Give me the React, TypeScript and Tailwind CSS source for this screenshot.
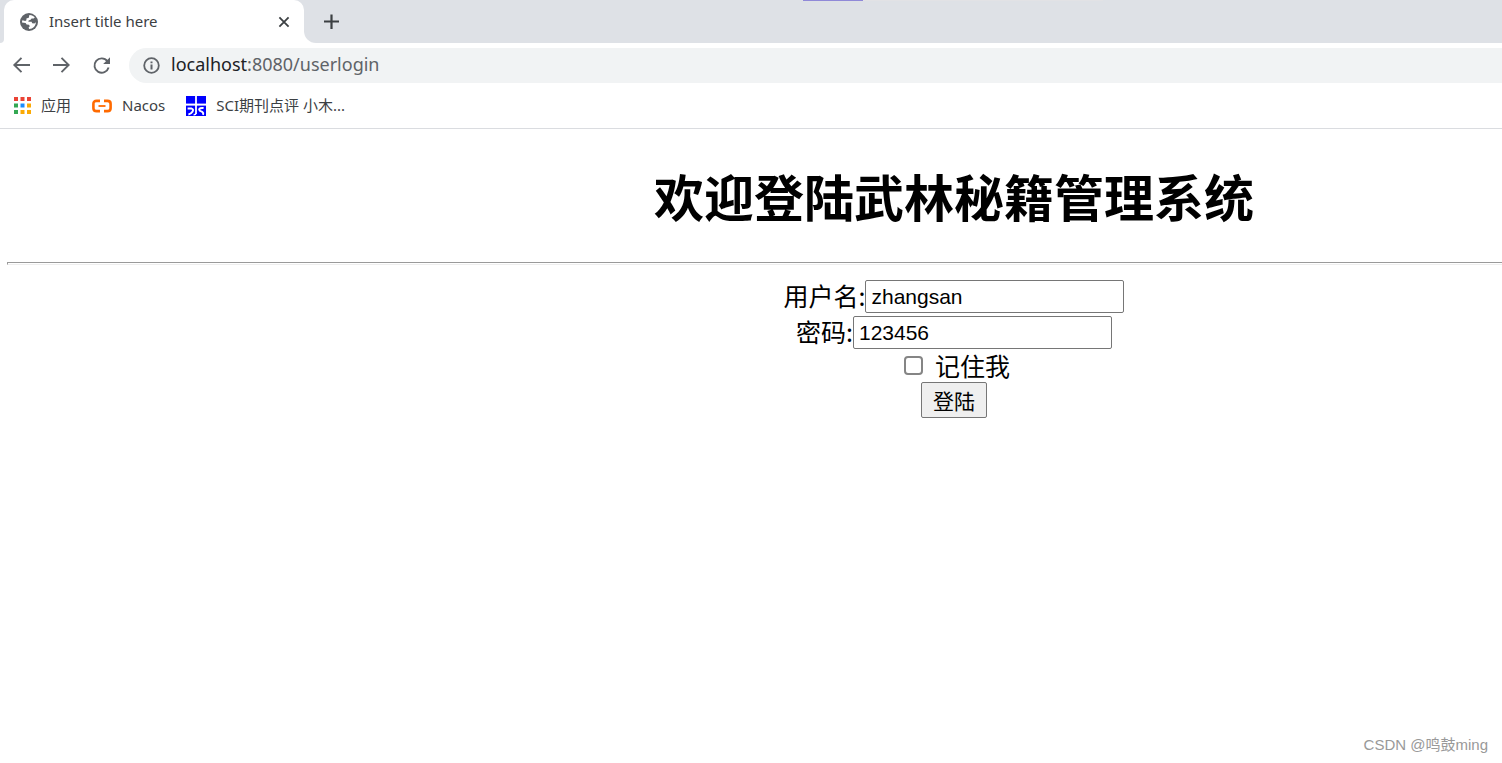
import { useState } from "react";
import type { ReactNode } from "react";

function GlobeIcon() {
  return (
    <svg width="20" height="20" viewBox="0 0 20 20" aria-hidden="true">
      <circle cx="10" cy="10" r="9" fill="#5f6368" />
      <path
        fill="#fff"
        d="M10.4 3C12.6 2.9 14.6 4 15.8 5.6L14.6 6.6 12.6 6.4 11.6 7.8 9.6 8.4 9.4 9.8 12.6 9.8 13.2 11.2 15.4 11.4 16.9 10.2C16.8 13.8 14 16.8 10.2 17L9.6 15.4 10.8 14.2 10 12.8 7.6 12.4 6.6 11 3 10.4C3 9.6 3.1 8.9 3.4 8.2L6.2 9 7.4 8.2 7.4 6.6 9.8 5.8Z"
      />
    </svg>
  );
}

function CloseIcon() {
  return (
    <svg width="12" height="12" viewBox="0 0 12 12" aria-hidden="true">
      <path d="M1.4 1.4 10.6 10.6M10.6 1.4 1.4 10.6" stroke="#3c4043" strokeWidth="1.8" />
    </svg>
  );
}

function PlusIcon() {
  return (
    <svg width="16" height="16" viewBox="0 0 16 16" aria-hidden="true">
      <path d="M8.5 0.5V15M1 7.5H16" stroke="#3c4043" strokeWidth="2.2" />
    </svg>
  );
}

function ArrowIcon({ forward = false }: { forward?: boolean }) {
  return (
    <svg width="18" height="18" viewBox="0 0 18 18" aria-hidden="true">
      <path
        d={forward ? "M1 8H16.5M9.5 0.8 16.7 8 9.5 15.2" : "M18 8H2.5M9.5 0.8 2.3 8 9.5 15.2"}
        fill="none"
        stroke="#5f6368"
        strokeWidth="1.9"
      />
    </svg>
  );
}

function ReloadIcon() {
  return (
    <svg width="18" height="18" viewBox="0 0 18 18" aria-hidden="true">
      <path d="M15.4 4.2A7.2 7.2 0 1 0 16.6 10.6" fill="none" stroke="#5f6368" strokeWidth="1.9" />
      <path d="M18 0.2V7H11.2Z" fill="#5f6368" />
    </svg>
  );
}

function InfoIcon() {
  return (
    <svg width="18" height="18" viewBox="0 0 18 18" aria-hidden="true">
      <circle cx="8.5" cy="8.5" r="7.3" fill="none" stroke="#5f6368" strokeWidth="1.8" />
      <path d="M8.5 7.5V12.5M8.5 4.4V6.2" stroke="#5f6368" strokeWidth="2" />
    </svg>
  );
}

const appDots = [
  "#ea4335", "#ea4335", "#ea4335",
  "#34a853", "#1a8cff", "#fbaa05",
  "#34a853", "#fbaa05", "#fbaa05",
];

function AppsIcon() {
  return (
    <svg width="17" height="17" viewBox="0 0 17 17" aria-hidden="true">
      {appDots.map((fill, i) => (
        <rect key={i} x={(i % 3) * 6.5} y={Math.floor(i / 3) * 6.5} width="4" height="4" fill={fill} />
      ))}
    </svg>
  );
}

function NacosIcon() {
  return (
    <svg width="20" height="14" viewBox="0 0 20 14" aria-hidden="true">
      <path
        d="M8 1.9H4.6Q1.4 1.9 1.4 4.8V9.2Q1.4 12.1 4.6 12.1H8M12 1.9H15.4Q18.6 1.9 18.6 4.8V9.2Q18.6 12.1 15.4 12.1H12"
        fill="none"
        stroke="#ff6a00"
        strokeWidth="2.6"
      />
      <path d="M6.5 7H13.5" stroke="#ff6a00" strokeWidth="1.8" />
    </svg>
  );
}

function JournalIcon() {
  return (
    <svg width="20" height="20" viewBox="0 0 20 20" aria-hidden="true">
      <rect width="20" height="20" fill="#0000ff" />
      <g fill="none" stroke="#fff">
        <path d="M10 0V18" strokeWidth="1.8" />
        <path d="M0 8.6H20" strokeWidth="2" />
        <path d="M1.6 12.6H5.6Q8 13.2 6.4 15.8 5 18 2.4 18.4" strokeWidth="2" />
        <path d="M10 17.4Q9.6 19 7.6 18.8" strokeWidth="1.6" />
        <path d="M17.6 12Q13.2 11.6 13.2 13.6 13.4 15 15.8 15.6 18 16.8 16.8 18.8" strokeWidth="2" />
      </g>
    </svg>
  );
}

function Bookmark({ icon, children }: { icon: ReactNode; children: ReactNode }) {
  return (
    <a href="#" className="flex items-center gap-2.5 whitespace-nowrap">
      {icon}
      <span>{children}</span>
    </a>
  );
}

function BrowserChrome() {
  return (
    <header className="font-['Noto_Sans','Noto_Sans_CJK_SC',sans-serif] text-[#3c4043]">
      <div className="relative flex h-[43px] bg-[#dee1e6]">
        <div className="w-1 bg-white">
          <div className="h-full rounded-br-lg bg-[#dee1e6]" />
        </div>
        <div className="flex w-[300px] items-center rounded-t-[10px] bg-white pr-3.5 pl-[15px] text-[15px]">
          <GlobeIcon />
          <span className="ml-2.5 flex-1 whitespace-nowrap">Insert title here</span>
          <button type="button" aria-label="Close tab">
            <CloseIcon />
          </button>
        </div>
        <div className="flex-1 bg-white">
          <div className="flex h-full items-center rounded-bl-xl bg-[#dee1e6] pl-[19px]">
            <button type="button" aria-label="New tab">
              <PlusIcon />
            </button>
          </div>
        </div>
        <div className="absolute top-0 left-[803px] h-px w-[300px] bg-[#e2e2e5]">
          <div className="h-full w-[60px] bg-[#9089d8]" />
        </div>
      </div>
      <div className="flex items-center pt-[5px] pl-3">
        <nav className="flex items-center gap-[22px]">
          <button type="button" aria-label="Back">
            <ArrowIcon />
          </button>
          <button type="button" aria-label="Forward">
            <ArrowIcon forward />
          </button>
          <button type="button" aria-label="Reload">
            <ReloadIcon />
          </button>
        </nav>
        <div className="ml-[19px] flex h-[35px] flex-1 items-center gap-2.5 rounded-l-full bg-[#f1f3f4] pl-3.5 text-lg/[33px] text-[#5f6368]">
          <InfoIcon />
          <span className="self-start">
            <span className="text-[#202124]">localhost</span>:8080/userlogin
          </span>
        </div>
      </div>
      <nav className="flex h-[46px] items-center gap-[21px] border-b border-[#dadce0] pl-3.5 text-[15px]">
        <Bookmark icon={<AppsIcon />}>应用</Bookmark>
        <Bookmark icon={<NacosIcon />}>Nacos</Bookmark>
        <Bookmark icon={<JournalIcon />}>SCI期刊点评 小木...</Bookmark>
      </nav>
    </header>
  );
}

function LoginForm() {
  const [user, setUser] = useState("zhangsan");
  const [password, setPassword] = useState("123456");
  const [remember, setRemember] = useState(false);
  const field =
    "h-[33px] w-[259px] rounded-xs border border-[#767676] bg-white px-[5px] font-['Liberation_Sans',sans-serif] text-[21px]";

  return (
    <form
      className="flex flex-col items-center pl-[406px] text-[25px]/[31px]"
      onSubmit={(e) => e.preventDefault()}
    >
      <div className="flex items-start pb-[3px]">
        <label htmlFor="user">用户名:</label>
        <input id="user" className={field} value={user} onChange={(e) => setUser(e.target.value)} />
      </div>
      <div className="flex items-start">
        <label htmlFor="password">密码:</label>
        <input id="password" className={field} value={password} onChange={(e) => setPassword(e.target.value)} />
      </div>
      <div className="flex h-[33px] items-center gap-3 pl-1.5">
        <input
          id="remember"
          type="checkbox"
          className="size-[19px] appearance-none rounded-sm border-2 border-[#858585] bg-white checked:bg-[#0075ff]"
          checked={remember}
          onChange={(e) => setRemember(e.target.checked)}
        />
        <label htmlFor="remember">记住我</label>
      </div>
      <button
        type="submit"
        className="h-9 rounded-xs border border-[#767676] bg-[#efefef] px-[11px] text-[21px]/[34px]"
      >
        登陆
      </button>
    </form>
  );
}

export default function App() {
  return (
    <div className="flex min-h-screen flex-col overflow-x-hidden bg-white text-black">
      <BrowserChrome />
      <main className="flex-1 font-['Noto_Sans_CJK_SC',sans-serif]">
        <h1 className="pt-[33px] pl-[406px] text-center text-[50px]/[66px] font-bold">
          欢迎登陆武林秘籍管理系统
        </h1>
        <hr className="mt-[34px] mb-[15px] ml-[7px] h-[3px] border border-r-0 border-t-[#9a9a9a] border-b-[#eeeeee] border-l-[#9a9a9a]" />
        <LoginForm />
      </main>
      <footer className="px-3.5 pb-[7px] text-right font-['Liberation_Sans','Noto_Sans_CJK_SC',sans-serif] text-[15px] text-[#999999]">
        CSDN @鸣鼓ming
      </footer>
    </div>
  );
}
